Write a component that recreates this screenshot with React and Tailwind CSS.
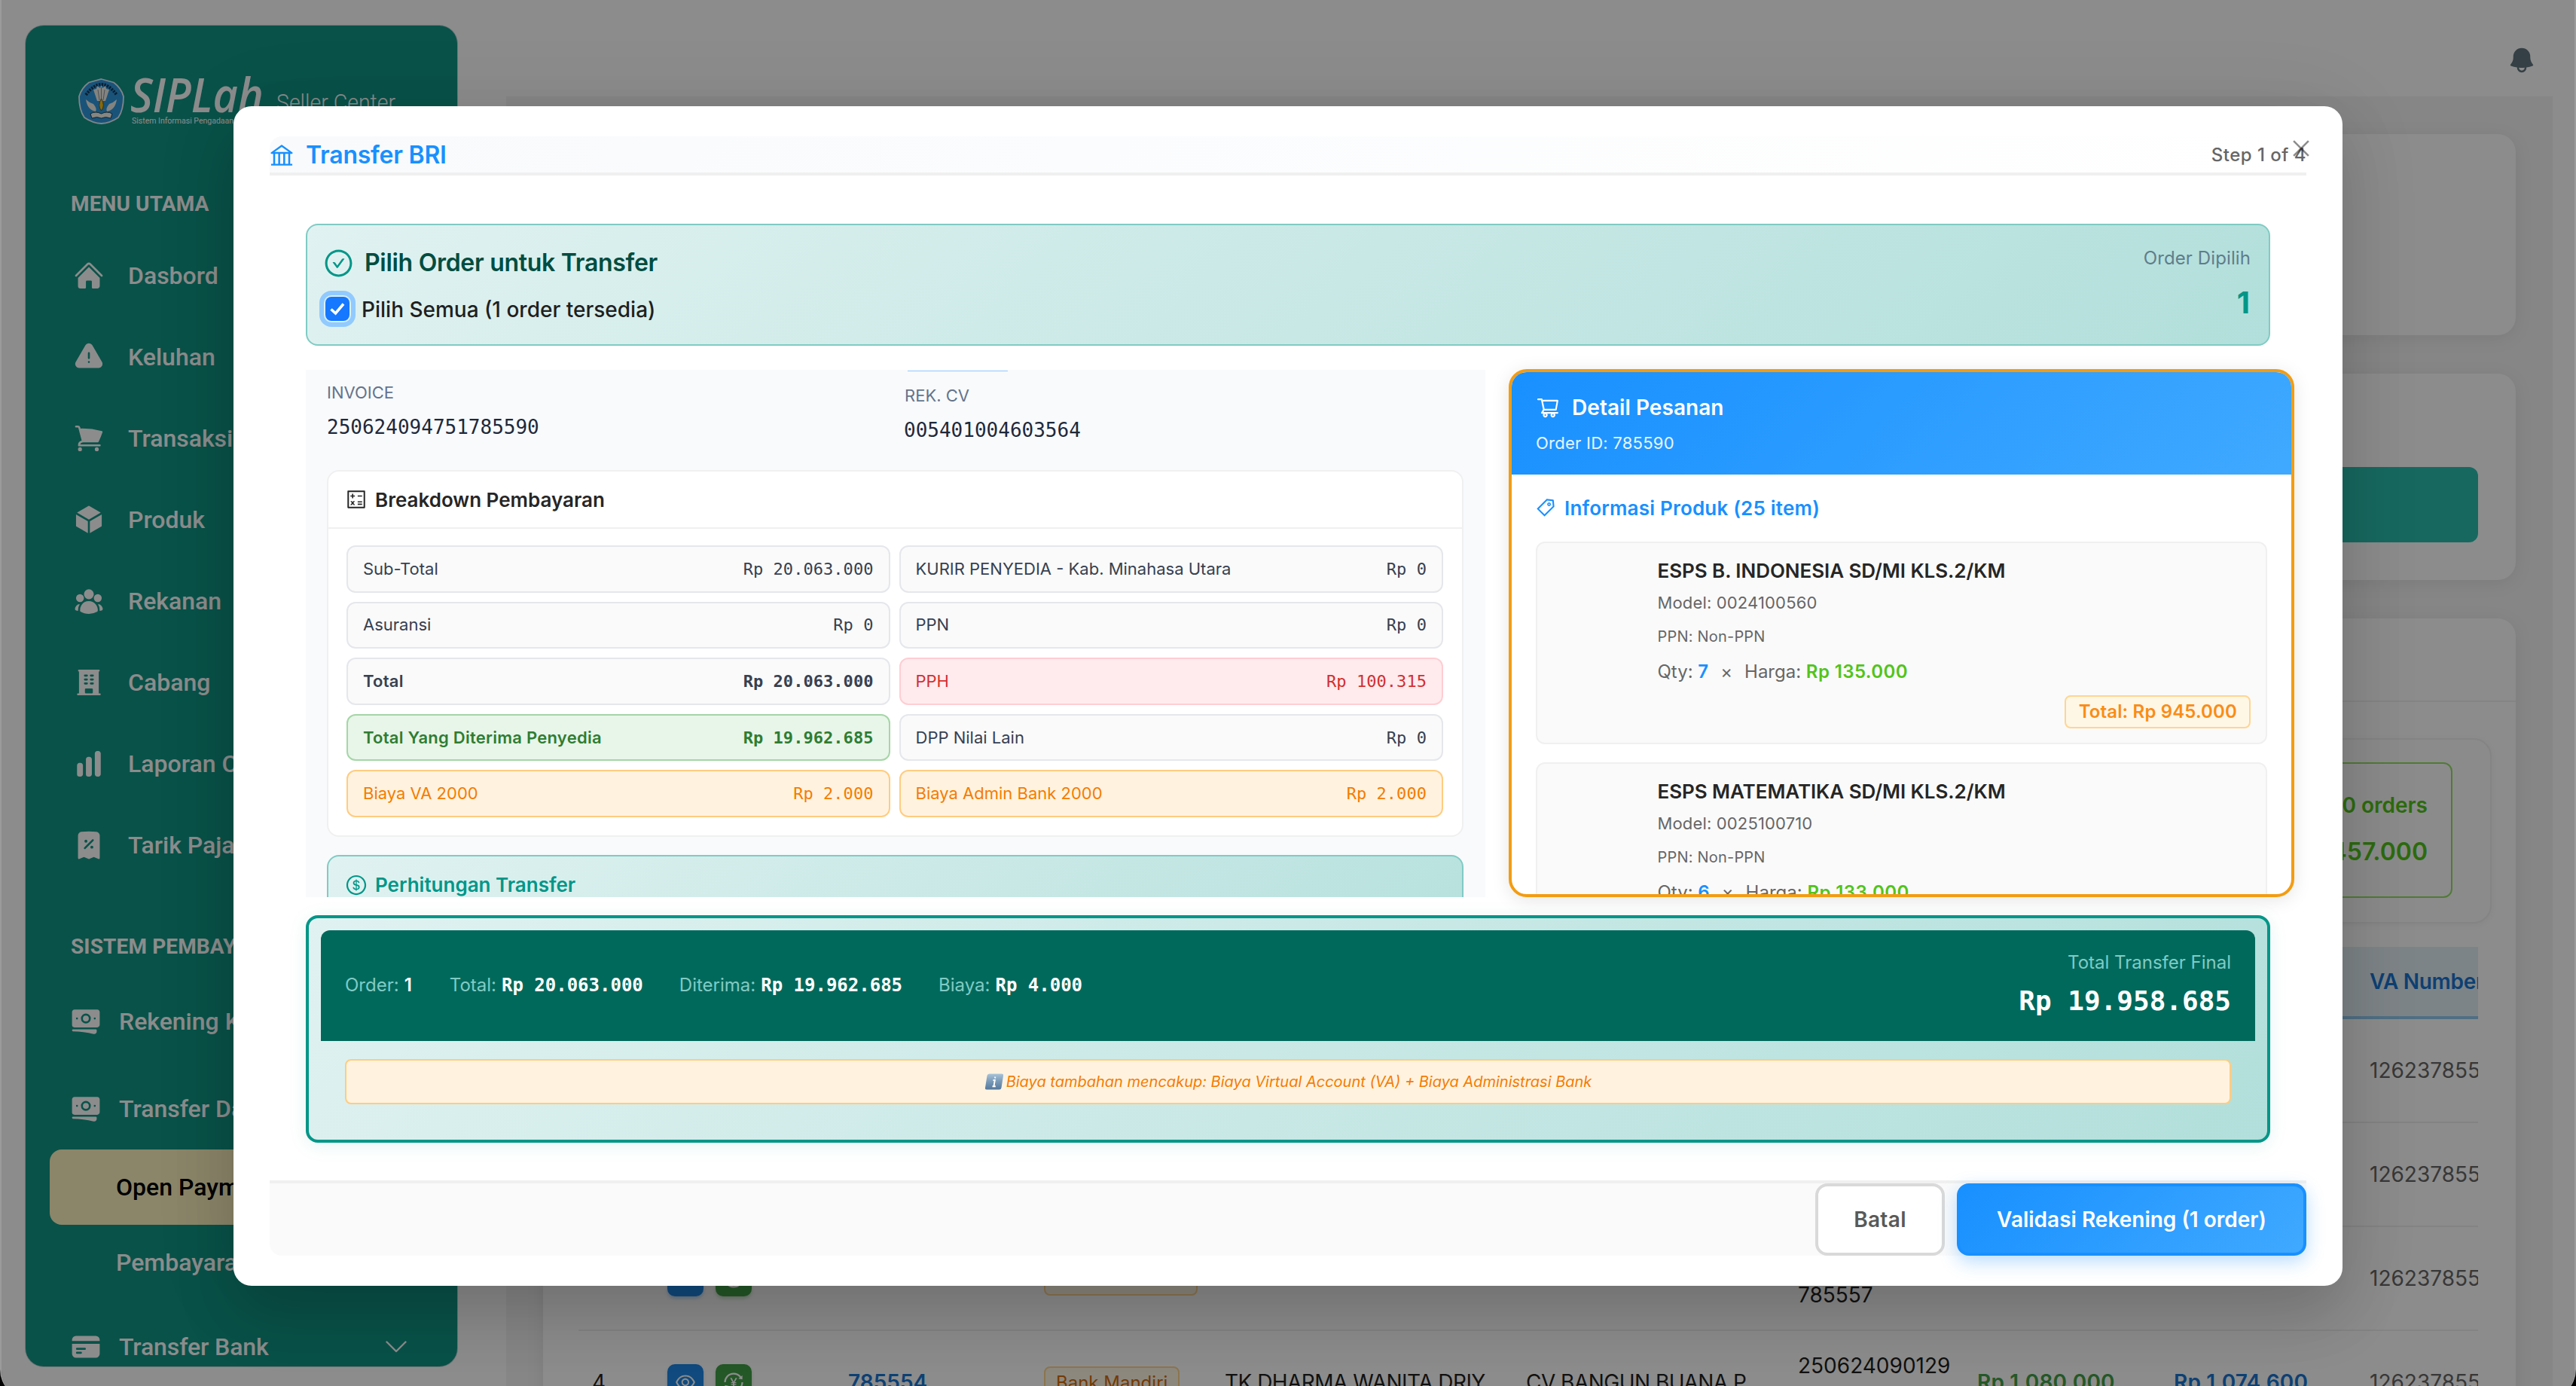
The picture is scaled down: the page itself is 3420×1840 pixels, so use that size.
import {
  HiHome,
  HiExclamationTriangle,
  HiShoppingCart,
  HiCube,
  HiUserGroup,
  HiBuildingOffice,
  HiChartBar,
  HiReceiptPercent,
  HiBanknotes,
  HiCreditCard,
  HiBell,
} from "react-icons/hi2";
import {
  AiOutlineBank,
  AiOutlineCheckCircle,
  AiOutlineCalculator,
  AiOutlineDollar,
  AiOutlineShoppingCart,
  AiOutlineTag,
  AiOutlineClose,
  AiOutlineEye,
  AiOutlineTransaction,
} from "react-icons/ai";

const MAIN_MENU = [
  { label: "Dasbord", Icon: HiHome },
  { label: "Keluhan", Icon: HiExclamationTriangle },
  { label: "Transaksi", Icon: HiShoppingCart },
  { label: "Produk", Icon: HiCube },
  { label: "Rekanan", Icon: HiUserGroup },
  { label: "Cabang", Icon: HiBuildingOffice },
  { label: "Laporan Cabang", Icon: HiChartBar },
  { label: "Tarik Pajak", Icon: HiReceiptPercent },
];

const CELLS = [
  { label: "Sub-Total", value: "Rp 20.063.000" },
  { label: "KURIR PENYEDIA - Kab. Minahasa Utara", value: "Rp 0" },
  { label: "Asuransi", value: "Rp 0" },
  { label: "PPN", value: "Rp 0" },
  { label: "Total", value: "Rp 20.063.000", tone: "bold" },
  { label: "PPH", value: "Rp 100.315", tone: "red" },
  { label: "Total Yang Diterima Penyedia", value: "Rp 19.962.685", tone: "green" },
  { label: "DPP Nilai Lain", value: "Rp 0" },
  { label: "Biaya VA 2000", value: "Rp 2.000", tone: "orange" },
  { label: "Biaya Admin Bank 2000", value: "Rp 2.000", tone: "orange" },
];

const TONES = {
  plain: "border-[#e5e7eb] bg-[#fafafa] text-[#374151]",
  bold: "border-[#e5e7eb] bg-[#fafafa] text-[#374151] font-semibold tracking-[0.25px]",
  red: "border-[#ffcdd2] bg-[#ffebee] text-[#d32f2f]",
  green: "border-[#a5d6a7] bg-[#e8f5e9] text-[#2e7d32] font-semibold tracking-[0.25px]",
  orange: "border-[#ffcc80] bg-[#fff3e0] text-[#f57c00]",
};

const PRODUCTS = [
  { name: "ESPS B. INDONESIA SD/MI KLS.2/KM", model: "0024100560", qty: 7, price: "Rp 135.000", total: "Rp 945.000" },
  { name: "ESPS MATEMATIKA SD/MI KLS.2/KM", model: "0025100710", qty: 6, price: "Rp 133.000" },
];

const ROWS = [
  { va: "1262378559" },
  { va: "1262378558" },
  { va: "1262378555", actions: true, bank: "Bank Mandiri", wide: true, invoice: ["", "785557"] },
  {
    va: "1262378554",
    no: "4",
    actions: true,
    order: "785554",
    bank: "Bank Mandiri",
    school: "TK DHARMA WANITA DRIY",
    cv: "CV BANGUN BUANA P",
    invoice: ["250624090129", "785554"],
    total: "Rp 1.080.000",
    received: "Rp 1.074.600",
  },
];

function Emblem() {
  return (
    <svg viewBox="0 0 61 61" className="h-[61px] w-[61px] shrink-0">
      <path
        d="M30.5 1 L47 5.500 Q57 13 60 24 Q60 42 53 52 Q42 59.500 30.500 60 Q19 59.500 8 52 Q1 42 1 24 Q4 13 14 5.500 Z"
        fill="#2e97dc"
        stroke="#e6f2fb"
        strokeWidth="1.8"
      />
      <path d="M10 22 Q30.500 -6 51 22" fill="none" stroke="#12395c" strokeWidth="4" strokeDasharray="2.400 1.300" />
      <path
        d="M20 15 L24 14 L25 10 L29 13 L30.500 9 L32 13 L36 10 L37 14 L41 15 L36 30 L25 30 Z"
        fill="#f1efe8"
      />
      <path d="M26 15 L28 29 M30.500 12 V29 M35 15 L33 29" stroke="#7c8a92" strokeWidth="0.900" />
      <path d="M10 28 Q12 42 23 44 Q25 40 20 34 Q14 32 10 28 Z" fill="#f1efe8" />
      <path d="M51 28 Q49 42 38 44 Q36 40 41 34 Q47 32 51 28 Z" fill="#f1efe8" />
      <path d="M30.500 27 Q36 36 30.500 43 Q25 36 30.500 27 Z" fill="#f2c21b" stroke="#5a4a10" strokeWidth="0.800" />
      <path d="M16 47 Q23 43 30.500 47 Q38 43 45 47 L43 53 Q36 50 30.500 53 Q25 50 18 53 Z" fill="#f4f2ec" stroke="#23343d" strokeWidth="0.900" />
    </svg>
  );
}

function Sidebar() {
  return (
    <aside className="mt-[34px] ml-[32px] flex h-[1780px] w-[573px] shrink-0 flex-col overflow-hidden rounded-[24px] bg-[#129585] font-[Roboto,sans-serif] text-[32px] font-medium text-white shadow-[0_0_0_1px_#c9d3d6]">
      <div className="flex h-[216px] shrink-0 items-start pt-[70px] pl-[70px]">
        <Emblem />
        <div className="ml-[8px] w-[194px]">
          <div className="h-[51px] w-[240px] origin-left scale-x-[0.9] font-['Open_Sans',sans-serif] text-[64px] leading-[42px] font-semibold whitespace-nowrap italic">
            SIPLah
          </div>
          <div className="pl-[2px] text-[10.500px] leading-[12px] font-normal whitespace-nowrap">
            Sistem Informasi Pengadaan Sekolah
          </div>
        </div>
        <div className="mt-[12px] origin-left scale-x-[0.89] text-[32px] leading-[40px] font-light whitespace-nowrap">
          Seller Center
        </div>
      </div>
      <div className="h-[62px] shrink-0 pt-px pl-[60px] text-[28px] leading-[40px] font-bold tracking-[0.130px]">MENU UTAMA</div>
      {MAIN_MENU.map(({ label, Icon }) => (
        <div key={label} className="flex h-[108px] shrink-0 items-center gap-[31px] pl-[63px] whitespace-nowrap">
          <Icon className="h-[42px] w-[42px] shrink-0" />
          {label}
        </div>
      ))}
      <div className="mt-[60px] h-[66px] shrink-0 pt-px pl-[60px] text-[28px] leading-[40px] font-bold tracking-[0.130px] whitespace-nowrap">
        SISTEM PEMBAYARAN
      </div>
      <div className="flex h-[116px] shrink-0 items-center gap-[23px] pb-[8px] pl-[59px]">
        <HiBanknotes className="h-[42px] w-[42px]" />
        Rekening Koran
      </div>
      <div className="flex h-[108px] shrink-0 items-center gap-[23px] pl-[59px]">
        <HiBanknotes className="h-[42px] w-[42px]" />
        Transfer Dana
      </div>
      <div className="mx-[32px] flex h-[100px] shrink-0 items-center rounded-[16px] bg-[#fdf5bf] pl-[88px] text-black">
        Open Payment
      </div>
      <div className="flex h-[108px] shrink-0 items-center pb-[8px] pl-[120px]">Pembayaran</div>
      <div className="flex h-[108px] shrink-0 items-center gap-[23px] pl-[59px] tracking-[-0.100px]">
        <HiCreditCard className="h-[42px] w-[42px]" />
        Transfer Bank
        <svg viewBox="0 0 28 16" className="mr-[67px] ml-auto h-[16px] w-[28px]" fill="none" stroke="currentColor" strokeWidth="2.400" strokeLinecap="round" strokeLinejoin="round">
          <path d="M1.500 1.500 L14 14 L26.500 1.500" />
        </svg>
      </div>
    </aside>
  );
}

function TableRow({ row }) {
  return (
    <div className="grid h-[138px] shrink-0 grid-cols-[118px_240px_260px_240px_400px_361px_238px_261px_260px_400px] items-center border-b-2 border-[#eeeeee] text-[28px] whitespace-nowrap text-[#1f1f1f]">
      <div className="pl-[18px]">{row.no}</div>
      <div className="flex gap-[16px]">
        {row.actions && (
          <>
            <div className="flex h-[48px] w-[48px] items-center justify-center rounded-[10px] bg-[#1e88e5] text-white shadow-[0_3px_4px_rgba(30,136,229,0.3)]">
              <AiOutlineEye className="h-[30px] w-[30px]" />
            </div>
            <div className="flex h-[48px] w-[48px] items-center justify-center rounded-[10px] bg-[#43a047] text-white shadow-[0_3px_4px_rgba(67,160,71,0.3)]">
              <AiOutlineTransaction className="h-[30px] w-[30px]" />
            </div>
          </>
        )}
      </div>
      <div className="font-semibold text-[#1976d2]">{row.order}</div>
      <div>
        {row.bank && (
          <span
            className={`inline-flex h-[44px] items-center rounded-[8px] border-2 border-[#ffd591] bg-[#fff7e6] px-[14px] text-[24px] text-[#d46b08] ${row.wide ? "w-[204px]" : ""}`}
          >
            {row.bank}
          </span>
        )}
      </div>
      <div className="tracking-[-0.540px]">{row.school}</div>
      <div className="tracking-[-0.520px]">{row.cv}</div>
      <div className="leading-[44px]">
        {row.invoice?.map((line, i) => (
          <div key={i} className="h-[44px]">
            {line}
          </div>
        ))}
      </div>
      <div className="font-semibold tracking-[0.190px] text-[#43a047]">{row.total}</div>
      <div className="font-semibold tracking-[0.190px] text-[#1976d2]">{row.received}</div>
      <div className="text-[#666666]">{row.va}</div>
    </div>
  );
}

function Background() {
  return (
    <div className="flex h-[1858px] bg-white">
      <Sidebar />
      <main className="ml-[65px] flex w-[2717px] shrink-0 flex-col">
        <div className="flex h-[128px] shrink-0 justify-end pt-[60px] pr-[21px]">
          <HiBell className="h-[40px] w-[40px] text-[#60757f]" />
        </div>
        <div className="flex h-[1730px] flex-col gap-[51px] overflow-hidden bg-[#f4f4f4] px-[49px] pt-[50px]">
          <div className="h-[267px] shrink-0 rounded-[24px] bg-white shadow-[0_4px_24px_rgba(0,0,0,0.08)]" />
          <div className="h-[274px] shrink-0 rounded-[24px] bg-white px-[50px] pt-[124px] shadow-[0_4px_24px_rgba(0,0,0,0.08)]">
            <div className="ml-auto h-[100px] w-[600px] rounded-[12px] bg-[#2bbfb0]" />
          </div>
          <div className="h-[1200px] shrink-0 rounded-[24px] bg-white shadow-[0_4px_24px_rgba(0,0,0,0.08)]">
            <div className="h-[111px] border-b-2 border-[#f0f0f0]" />
            <div className="mx-[32px] mt-[48px] flex h-[246px] justify-end rounded-[24px] border-2 border-[#f0f0f0] bg-[#fdfdfd] pt-[30px] pr-[50px] shadow-[0_2px_8px_rgba(0,0,0,0.05)]">
              <div className="flex h-[180px] w-[420px] flex-col items-end justify-center rounded-[12px] border-2 border-[#95de64] pr-[31px] font-semibold text-[#52c41a]">
                <div className="mt-[-4px] h-[62px] text-[28px] leading-[62px]">10 orders</div>
                <div className="h-[62px] text-[32px] leading-[62px]">Rp 45.457.000</div>
              </div>
            </div>
            <div className="mx-[47px] mt-[31px] w-[2522px] overflow-hidden">
              <div className="flex h-[96px] items-center border-b-4 border-[#91caee] bg-[#e4f0f6] pl-[2378px] text-[28px] font-semibold tracking-[-0.300px] whitespace-nowrap text-[#1976d2]">
                VA Number
              </div>
              {ROWS.map((row) => (
                <TableRow key={row.va} row={row} />
              ))}
            </div>
          </div>
        </div>
      </main>
    </div>
  );
}

function SelectBanner() {
  return (
    <div className="flex h-[162px] shrink-0 justify-between rounded-[16px] border-2 border-[#80cbc4] bg-[linear-gradient(135deg,#e0f2f1_0%,#b2dfdb_100%)] px-[24px] pt-[26px]">
      <div>
        <div className="flex h-[48px] items-center text-[32px] font-semibold tracking-[-0.290px] text-[#004d40]">
          <AiOutlineCheckCircle className="-ml-[3px] mr-[14px] h-[41px] w-[41px] text-[#009688]" />
          Pilih Order untuk Transfer
        </div>
        <div className="mt-[21px] flex h-[32px] items-center text-[28px] font-medium text-[#1f1f1f]">
          <div className="mr-[16px] flex h-[32px] w-[32px] items-center justify-center rounded-[8px] bg-[#1677ff] shadow-[0_0_0_2px_#d8f0f5,0_0_0_8px_#91caff]">
            <svg viewBox="0 0 20 20" className="h-[20px] w-[20px]" fill="none" stroke="#ffffff" strokeWidth="3.600">
              <path d="M1.500 10.500 L7.500 16 L18 3.500" />
            </svg>
          </div>
          <span className="pt-px">Pilih Semua (1 order tersedia)</span>
        </div>
      </div>
      <div className="text-right">
        <div className="h-[36px] text-[24px] leading-[36px] tracking-[0.100px] text-[#607d8b]">Order Dipilih</div>
        <div className="mt-[13px] pr-px text-[40px] leading-[56px] font-bold text-[#009688]">1</div>
      </div>
    </div>
  );
}

function OrderPanel() {
  return (
    <div className="w-[1566px] shrink-0 overflow-hidden bg-[#f8fafc] pr-[29px] pl-[28px]">
      <div className="flex h-[133px]">
        <div className="w-[766px] pt-[12px]">
          <div className="h-[36px] text-[22px] leading-[36px] text-[#64748b]">INVOICE</div>
          <div className="mt-[10px] h-[36px] font-['DejaVu_Sans_Mono',monospace] text-[26px] leading-[36px] text-[#1e293b]">
            250624094751785590
          </div>
        </div>
        <div>
          <div className="ml-[5px] h-[2px] w-[133px] border-b border-[#91caff]" />
          <div className="mt-[14px] h-[36px] pl-px text-[22px] leading-[36px] text-[#64748b]">REK. CV</div>
          <div className="mt-[10px] h-[36px] font-['DejaVu_Sans_Mono',monospace] text-[26px] leading-[36px] text-[#1e293b]">
            005401004603564
          </div>
        </div>
      </div>
      <div className="h-[487px] rounded-[16px] border-2 border-[#f0f0f0] bg-white">
        <div className="flex h-[76px] items-center border-b-2 border-[#f0f0f0] pl-[22px] text-[26px] font-semibold text-[#262626]">
          <AiOutlineCalculator className="mr-[10px] h-[30px] w-[30px]" />
          Breakdown Pembayaran
        </div>
        <div className="grid h-[383px] grid-cols-[721.500px_722.500px] grid-rows-5 gap-[12px] px-[24px] pt-[22px]">
          {CELLS.map((c) => (
            <div
              key={c.label}
              className={`flex items-center justify-between rounded-[12px] border-2 px-[20px] text-[22px] ${TONES[c.tone || "plain"]}`}
            >
              <span>{c.label}</span>
              <span className="font-['DejaVu_Sans_Mono',monospace] tracking-[0.050px]">{c.value}</span>
            </div>
          ))}
        </div>
      </div>
      <div className="mt-[24px] h-[300px] rounded-[16px] border-2 border-[#80cbc4] bg-[linear-gradient(135deg,#e0f2f1_0%,#b2dfdb_100%)]">
        <div className="flex h-[74px] items-center pt-px pl-[22px] text-[26px] font-semibold text-[#009688]">
          <AiOutlineDollar className="mr-[10px] h-[30px] w-[30px]" />
          Perhitungan Transfer
        </div>
      </div>
    </div>
  );
}

function ProductCard({ product }) {
  return (
    <div className="h-[269px] shrink-0 rounded-[12px] border-2 border-[#f0f0f0] bg-[#fafafa] pt-[17px] pr-[20px] pl-[159.500px] text-[#666666]">
      <div className="h-[40px] text-[26px] leading-[40px] font-semibold tracking-[-0.060px] text-[#262626]">{product.name}</div>
      <div className="mt-[4px] h-[36px] text-[22px] leading-[36px] tracking-[0.150px]">Model: {product.model}</div>
      <div className="mt-[11px] h-[32px] text-[20px] leading-[32px] tracking-[0.200px]">PPN: Non-PPN</div>
      <div className="mt-[13px] flex h-[36px] items-center text-[24px] leading-[36px]">
        <span>
          Qty: <span className="font-semibold text-[#1890ff]">{product.qty}</span>
        </span>
        <span className="mx-[16px]">×</span>
        <span>
          Harga: <span className="font-semibold tracking-[0.400px] text-[#52c41a]">{product.price}</span>
        </span>
      </div>
      {product.total && (
        <div className="mt-[13px] flex justify-end">
          <div className="flex h-[44px] items-center rounded-[8px] border-2 border-[#ffd591] bg-[#fff7e6] pr-[16px] pl-[17px] text-[24px] font-semibold tracking-[0.140px] text-[#fa8c16]">
            Total: {product.total}
          </div>
        </div>
      )}
    </div>
  );
}

function DetailPanel() {
  return (
    <div className="-mt-px h-[701px] w-[1043px] shrink-0 overflow-hidden rounded-[24px] border-4 border-[#f39c12] bg-white shadow-[0_4px_24px_rgba(0,0,0,0.1)]">
      <div className="h-[136px] bg-[linear-gradient(135deg,#1890ff_0%,#40a9ff_100%)] pt-[23px] pl-[32px] text-white">
        <div className="flex h-[48px] items-center text-[28px] font-semibold tracking-[0.050px]">
          <AiOutlineShoppingCart className="mr-[16px] h-[32px] w-[32px]" />
          Detail Pesanan
        </div>
        <div className="mt-px h-[44px] text-[22px] leading-[44px] tracking-[0.250px] text-white/90">Order ID: 785590</div>
      </div>
      <div className="flex flex-col px-[32px] pt-[24px]">
        <div className="flex h-[40px] items-center text-[26px] font-semibold tracking-[0.200px] text-[#1890ff]">
          <AiOutlineTag className="mr-[11px] -ml-px h-[28px] w-[28px]" />
          Informasi Produk (25 item)
        </div>
        <div className="mt-[25px] flex flex-col gap-[24px]">
          {PRODUCTS.map((p) => (
            <ProductCard key={p.model} product={p} />
          ))}
        </div>
      </div>
    </div>
  );
}

function Stat({ label, value, mono }) {
  return (
    <div className="flex items-center gap-[7px] whitespace-nowrap">
      <span className="text-[#80cbc4]">{label}</span>
      <span className={mono ? "font-['DejaVu_Sans_Mono',monospace] font-bold" : "pr-[2px] font-semibold"}>{value}</span>
    </div>
  );
}

function Summary() {
  return (
    <div className="mt-[24px] h-[302px] shrink-0 rounded-[16px] border-4 border-[#009688] bg-[linear-gradient(135deg,#e0f2f1_0%,#b2dfdb_100%)] p-[16px] shadow-[0_4px_24px_rgba(0,150,136,0.1)]">
      <div className="flex h-[147px] items-center justify-between rounded-t-[12px] bg-[#00695c] px-[32px] text-[24px] text-white">
        <div className="flex gap-[48px] pb-px">
          <Stat label="Order:" value="1" />
          <Stat label="Total:" value="Rp 20.063.000" mono />
          <Stat label="Diterima:" value="Rp 19.962.685" mono />
          <Stat label="Biaya:" value="Rp 4.000" mono />
        </div>
        <div className="pb-[4px] text-right">
          <div className="h-[44px] leading-[44px] text-[#80cbc4]">Total Transfer Final</div>
          <div className="h-[58px] font-['DejaVu_Sans_Mono',monospace] text-[36px] leading-[58px] font-bold">
            Rp 19.958.685
          </div>
        </div>
      </div>
      <div className="mx-[32px] mt-[24px] flex h-[60px] items-center justify-center rounded-[8px] border-2 border-[#ffcc80] bg-[#fff3e0] text-[20px] text-[#f57c00] italic">
        <svg viewBox="0 0 26 22" className="mr-[3px] h-[22px] w-[26px]">
          <defs>
            <linearGradient id="infoTile" x1="0" y1="0" x2="0" y2="1">
              <stop offset="0" stopColor="#a9c3d9" />
              <stop offset="0.450" stopColor="#7d9dba" />
              <stop offset="1" stopColor="#54789c" />
            </linearGradient>
          </defs>
          <path d="M6.500 0.500 H23 Q25.500 0.500 25 3 L22.500 19 Q22 21.500 19.500 21.500 H3 Q0.500 21.500 1 19 L3.500 3 Q4 0.500 6.500 0.500 Z" fill="url(#infoTile)" />
          <path d="M14.300 4.500 L14 6.500 M11.500 9 H13.800 L12.500 17 M10.500 17.200 H14.800" stroke="#ffffff" strokeWidth="1.900" fill="none" />
        </svg>
        Biaya tambahan mencakup: Biaya Virtual Account (VA) + Biaya Administrasi Bank
      </div>
    </div>
  );
}

function Modal() {
  return (
    <div className="absolute top-[141px] left-[310px] flex h-[1566px] w-[2800px] flex-col rounded-[24px] bg-white px-[48px] pt-[40px] shadow-[0_40px_80px_rgba(0,0,0,0.15),0_10px_120px_rgba(0,0,0,0.08)]">
      <div className="flex h-[52px] shrink-0 items-center justify-between rounded-t-[16px] border-b-4 border-[#f0f0f0] bg-[linear-gradient(135deg,#f8fafc_0%,#ffffff_100%)] pt-[2px]">
        <div className="flex items-center text-[32px] leading-[40px] font-semibold tracking-[-0.230px] text-[#1890ff]">
          <AiOutlineBank className="mr-[14px] -ml-[2px] h-[36px] w-[36px]" />
          Transfer BRI
        </div>
        <div className="text-[24px] leading-[40px] font-medium tracking-[0.490px] text-[#666666]">Step 1 of 4</div>
      </div>
      <button className="absolute top-[40px] right-[39px] text-black/45">
        <AiOutlineClose className="h-[32px] w-[32px]" />
      </button>
      <div className="flex h-[1334px] shrink-0 flex-col px-[48px] pt-[64px]">
        <SelectBanner />
        <div className="mt-[32px] flex h-[700px] shrink-0 gap-[31px]">
          <OrderPanel />
          <DetailPanel />
        </div>
        <Summary />
      </div>
      <div className="flex h-[100px] shrink-0 items-center justify-end gap-[16px] rounded-b-[16px] border-t-4 border-[#f0f0f0] bg-[#fafafa] text-[28px] font-semibold">
        <button className="h-[96px] w-[172px] rounded-[16px] border-4 border-[#d9d9d9] bg-white tracking-[0.340px] text-[#595959]">
          Batal
        </button>
        <button className="h-[96px] w-[464px] rounded-[16px] border-4 border-[#1890ff] bg-[linear-gradient(135deg,#1890ff_0%,#40a9ff_100%)] text-white shadow-[0_8px_24px_rgba(24,144,255,0.3)]">
          Validasi Rekening (1 order)
        </button>
      </div>
    </div>
  );
}

export default function App() {
  return (
    <div className="h-[1840px] w-[3420px] overflow-hidden bg-black font-[Inter,sans-serif]">
      <div className="relative h-[1858px] w-[3420px] overflow-hidden rounded-b-[40px] border-x-2 border-[#9b9b9b]">
        <Background />
        <div className="absolute inset-0 bg-black/45" />
        <div className="absolute inset-y-0 -left-[2px]">
          <Modal />
        </div>
      </div>
    </div>
  );
}
